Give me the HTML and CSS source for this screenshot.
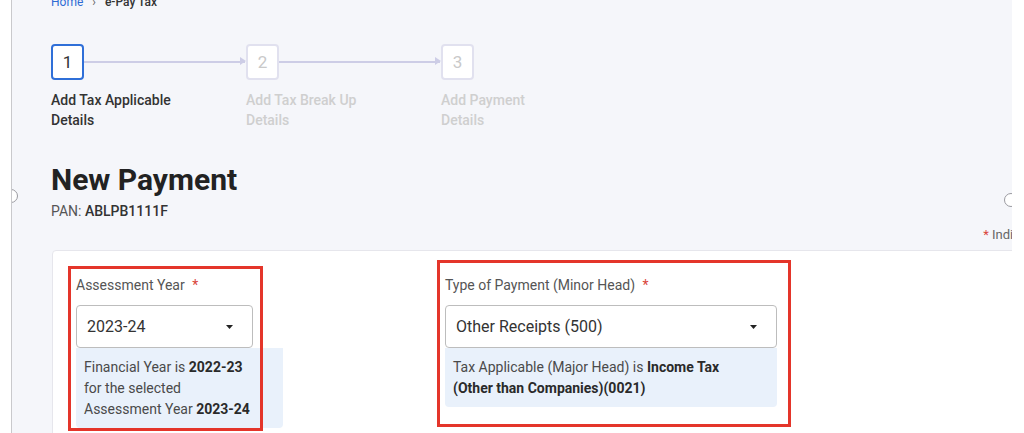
FILE: index.html
```html
<!DOCTYPE html>
<html lang="en">
<head>
<meta charset="utf-8">
<title>e-Pay Tax - New Payment</title>
<link rel="stylesheet" href="styles.css">
</head>
<body>
<div class="shell">
  <div class="rail"></div>
  <main class="main">
    <span class="handle handle-left"></span>
    <span class="handle handle-right"></span>
    <div class="content">
      <nav class="crumbs"><a class="crumb-link">Home</a><span class="crumb-sep">›</span><span class="crumb-cur">e-Pay Tax</span></nav>

      <ol class="steps">
        <li class="step step-active">
          <div class="step-top"><span class="step-num">1</span><span class="connector"></span></div>
          <div class="step-label">Add Tax Applicable<br>Details</div>
        </li>
        <li class="step">
          <div class="step-top"><span class="step-num">2</span><span class="connector"></span></div>
          <div class="step-label">Add Tax Break Up<br>Details</div>
        </li>
        <li class="step step-last">
          <div class="step-top"><span class="step-num">3</span></div>
          <div class="step-label">Add Payment<br>Details</div>
        </li>
      </ol>

      <h1 class="title">New Payment</h1>
      <p class="pan">PAN: <strong>ABLPB1111F</strong></p>
      <p class="mandatory"><span class="req">*</span> Indicates mandatory fields</p>

      <section class="card">
        <div class="fields">
          <div class="field field-ay">
            <div class="field-label">Assessment Year <span class="req">*</span></div>
            <div class="select select-ay">
              <span>2023-24</span>
              <svg class="caret" width="7" height="4" viewBox="0 0 7 4"><path d="M0 0h7L3.5 4z"/></svg>
            </div>
            <div class="info info-ay">Financial Year is <b>2022-23</b><br>for the selected<br>Assessment Year <b>2023-24</b></div>
            <span class="highlight highlight-ay"></span>
          </div>
          <div class="field field-mh">
            <div class="field-label">Type of Payment (Minor Head) <span class="req">*</span></div>
            <div class="select">
              <span>Other Receipts (500)</span>
              <svg class="caret" width="7" height="4" viewBox="0 0 7 4"><path d="M0 0h7L3.5 4z"/></svg>
            </div>
            <div class="info">Tax Applicable (Major Head) is <b>Income Tax</b><br><b>(Other than Companies)(0021)</b></div>
            <span class="highlight highlight-mh"></span>
          </div>
        </div>
      </section>
    </div>
  </main>
  <div class="gutter"></div>
</div>
</body>
</html>
```

FILE: styles.css
```css
* { box-sizing: border-box; }

html, body {
  margin: 0;
  height: 433px;
  overflow: hidden;
}

body {
  font-family: Roboto, "Liberation Sans", sans-serif;
  color: #333;
  background: #fff;
}

.shell {
  display: flex;
  height: 433px;
}

.rail {
  width: 12px;
  flex: none;
  background: #fff;
  border-right: 1px solid #c9c9cc;
}

.main {
  flex: 1;
  position: relative;
  overflow: hidden;
  background: #f5f6fa;
}

.gutter {
  width: 12px;
  flex: none;
  background: #fff;
}

.handle {
  position: absolute;
  width: 14px;
  height: 14px;
  border: 1.5px solid #9a9aa0;
  border-radius: 50%;
  background: #fff;
}

.handle-left { left: -8px; top: 189px; }
.handle-right { left: 992px; top: 193px; }

.content {
  width: 1094px;
  padding-left: 39px;
  box-sizing: content-box;
}

/* breadcrumb */
.crumbs {
  margin-top: -5px;
  font-size: 12px;
  line-height: 14px;
  display: flex;
  gap: 9px;
}
.crumb-link { color: #2f6bd4; }
.crumb-sep { color: #666; }
.crumb-cur { color: #333; font-weight: 500; }

/* stepper */
.steps {
  list-style: none;
  margin: 35px 0 0;
  padding: 0;
  display: flex;
}

.step { width: 195px; }
.step-last { width: auto; }

.step-top {
  display: flex;
  align-items: center;
}

.step-num {
  width: 33px;
  height: 36px;
  flex: none;
  display: flex;
  align-items: center;
  justify-content: center;
  background: #fff;
  border: 2px solid #e1e1ef;
  border-radius: 4px;
  font-size: 17px;
  color: #c9c9c9;
}

.step-active .step-num {
  border-color: #2f6fd8;
  color: #333;
}

.connector {
  flex: 1;
  height: 1.5px;
  background: #cdcde6;
  position: relative;
  margin-right: 1px;
}
.connector::after {
  content: "";
  position: absolute;
  right: -1px;
  top: -4px;
  border-left: 6px solid #cdcde6;
  border-top: 4.5px solid transparent;
  border-bottom: 4.5px solid transparent;
}

.step-label {
  margin-top: 10px;
  font-size: 14px;
  line-height: 20px;
  font-weight: 500;
  color: #cfcfcf;
}
.step-active .step-label { color: #333; }

/* heading */
.title {
  margin: 32px 0 0;
  font-size: 30px;
  line-height: 36px;
  font-weight: 700;
  color: #222;
}

.pan {
  margin: 3px 0 0;
  font-size: 14px;
  line-height: 20px;
  color: #555;
}
.pan strong { color: #333; font-weight: 500; }

.mandatory {
  margin: 4px 0 0;
  text-align: right;
  font-size: 13px;
  line-height: 20px;
  color: #666;
  white-space: nowrap;
}

.req { color: #d9443a; }

/* card */
.card {
  margin-top: 5px;
  margin-left: 1px;
  background: #fff;
  border: 1px solid #e6e6ec;
  border-radius: 4px;
  padding: 24px 23px 40px;
  min-height: 260px;
}

.fields {
  display: grid;
  grid-template-columns: 207px 332px;
  column-gap: 162px;
  align-items: start;
}

.field { position: relative; }

.field-label {
  font-size: 14px;
  line-height: 20px;
  color: #555;
}
.field-label .req { margin-left: 4px; }

.select {
  margin-top: 10px;
  height: 43px;
  background: #fff;
  border: 1px solid #bdbdbd;
  border-radius: 4px;
  display: flex;
  align-items: center;
  justify-content: space-between;
  padding: 0 19px 0 10px;
  font-size: 16px;
  color: #333;
}
.select-ay { width: 177px; }

.caret { fill: #222; }

.info {
  background: #e9f1fb;
  border-radius: 0 0 4px 4px;
  padding: 9px 8px 8px;
  font-size: 14px;
  line-height: 21px;
  color: #4a4a4a;
}
.info b { color: #2a2a2a; font-weight: 700; }

.highlight {
  position: absolute;
  border: 3px solid #e4352a;
  pointer-events: none;
}
.highlight-ay { left: -8px; top: -9px; width: 195px; height: 165px; }
.highlight-mh { left: -8px; top: -15px; width: 354px; height: 167px; }
```
